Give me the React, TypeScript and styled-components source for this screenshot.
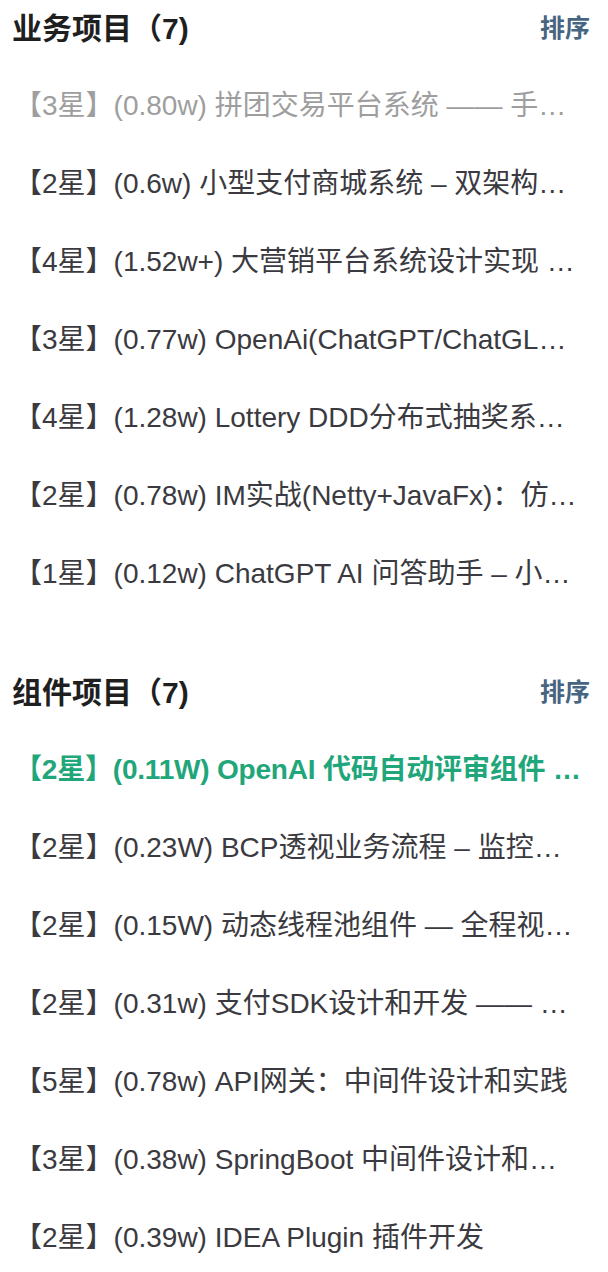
import React from "react";
import styled, { createGlobalStyle } from "styled-components";

const Global = createGlobalStyle`
  html, body { margin: 0; padding: 0; background: #ffffff; }
  body {
    font-family: "Liberation Sans", "Noto Sans CJK SC", sans-serif;
    -webkit-font-smoothing: antialiased;
  }
`;

const Page = styled.div`
  width: 608px;
  display: flex;
  flex-direction: column;
  gap: 54px;
`;

const Group = styled.section`
  display: flex;
  flex-direction: column;
`;

const GroupHeader = styled.div`
  display: flex;
  align-items: center;
  justify-content: space-between;
  height: 52px;
  padding: 0 18px 0 12px;
`;

const GroupTitle = styled.h2`
  margin: 0;
  font-size: 30px;
  font-weight: 700;
  color: #1f1f1f;
`;

const SortLink = styled.a`
  font-size: 25px;
  font-weight: 700;
  color: #476582;
  cursor: pointer;
`;

const List = styled.ul`
  list-style: none;
  margin: 12px 0 0;
  padding: 0;
  display: flex;
  flex-direction: column;
`;

const Item = styled.li<{ $state?: "visited" | "active" }>`
  height: 78px;
  display: flex;
  align-items: center;
  padding: 0 23.5px 0 14px;
  font-size: 28px;
  font-weight: ${(p) => (p.$state === "active" ? 700 : 400)};
  letter-spacing: ${(p) => (p.$state === "active" ? "-0.2px" : "normal")};
  color: ${(p) =>
    p.$state === "active" ? "#1fa67a" : p.$state === "visited" ? "#9e9e9e" : "#3a3a40"};
`;

const ItemText = styled.span`
  display: block;
  white-space: nowrap;
  overflow: hidden;
  text-overflow: ellipsis;
  min-width: 0;
`;

type Entry = { text: string; state?: "visited" | "active" };

const business: Entry[] = [
  { text: "【3星】(0.80w) 拼团交易平台系统 —— 手写DDD架构", state: "visited" },
  { text: "【2星】(0.6w) 小型支付商城系统 – 双架构实现" },
  { text: "【4星】(1.52w+) 大营销平台系统设计实现 「DDD」" },
  { text: "【3星】(0.77w) OpenAi(ChatGPT/ChatGLM) 应用项目" },
  { text: "【4星】(1.28w) Lottery DDD分布式抽奖系统 – 全程视频" },
  { text: "【2星】(0.78w) IM实战(Netty+JavaFx)：仿PC端微信" },
  { text: "【1星】(0.12w) ChatGPT AI 问答助手 – 小傅哥" },
];

const components: Entry[] = [
  { text: "【2星】(0.11W) OpenAI 代码自动评审组件 — 全程视频", state: "active" },
  { text: "【2星】(0.23W) BCP透视业务流程 – 监控系统" },
  { text: "【2星】(0.15W) 动态线程池组件 — 全程视频讲解" },
  { text: "【2星】(0.31w) 支付SDK设计和开发 —— 对接支付宝" },
  { text: "【5星】(0.78w) API网关：中间件设计和实践" },
  { text: "【3星】(0.38w) SpringBoot 中间件设计和开发 — 全程视频" },
  { text: "【2星】(0.39w) IDEA Plugin 插件开发" },
];

function Section({ title, items }: { title: string; items: Entry[] }) {
  return (
    <Group>
      <GroupHeader>
        <GroupTitle>{title}</GroupTitle>
        <SortLink>排序</SortLink>
      </GroupHeader>
      <List>
        {items.map((it) => (
          <Item key={it.text} $state={it.state}>
            <ItemText>{it.text}</ItemText>
          </Item>
        ))}
      </List>
    </Group>
  );
}

export default function App() {
  return (
    <>
      <Global />
      <Page>
        <Section title="业务项目（7)" items={business} />
        <Section title="组件项目（7)" items={components} />
      </Page>
    </>
  );
}
